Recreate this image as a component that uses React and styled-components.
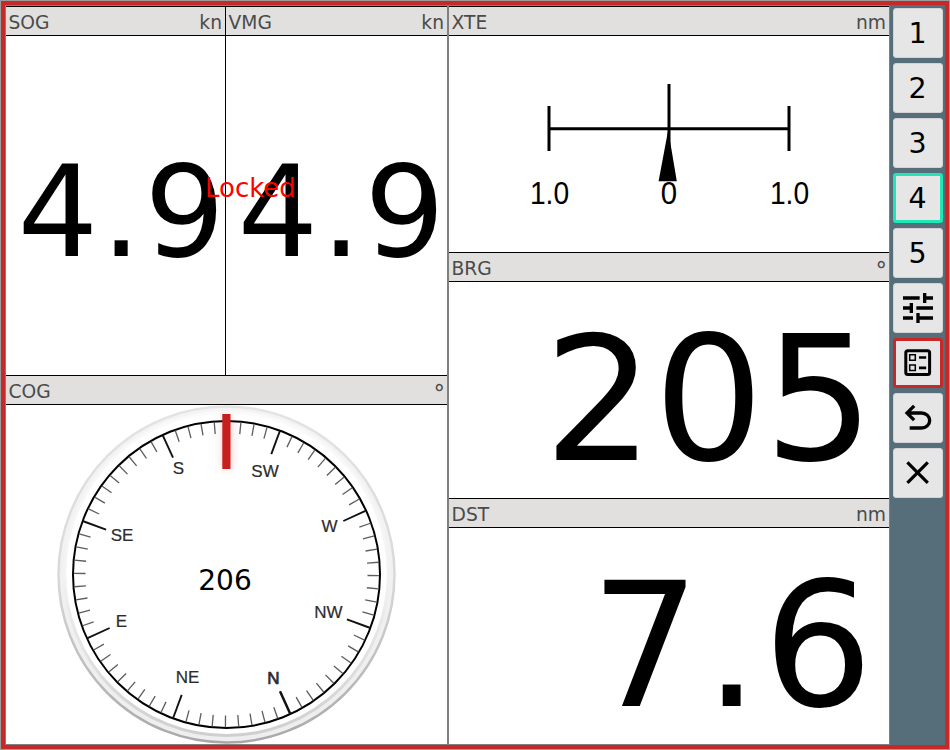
import React from 'react';
import styled, { createGlobalStyle } from 'styled-components';

const Global = createGlobalStyle`
  * { box-sizing: border-box; }
  body { margin: 0; background: #9a9a9a; font-family: "DejaVu Sans", sans-serif; overflow: hidden; }
`;

const Frame = styled.div`
  width: 950px;
  height: 750px;
  padding: 1px;
  background: #9c9c9c;
`;

const Alarm = styled.div`
  position: relative;
  display: flex;
  width: 948px;
  height: 748px;
  border: 4px solid #c82828;
`;

const Dashboard = styled.main`
  display: grid;
  grid-template-columns: 441px 440px;
  gap: 2px;
  width: 885px;
  height: 740px;
  padding: 1px;
  background: #808080;
`;

const Column = styled.section`
  display: flex;
  flex-direction: column;
`;

const Split = styled.div`
  flex: 1;
  display: grid;
  grid-template-columns: 220px 221px;
`;

const Widget = styled.article`
  flex: 1;
  min-height: 0;
  display: flex;
  flex-direction: column;
  background: #fff;
  border-top: 1px solid #000;
  border-right: ${(p) => (p.$divided ? '1px solid #000' : '0')};
`;

const Header = styled.header`
  flex: none;
  display: flex;
  justify-content: space-between;
  height: 29px;
  padding: 0 3px 0 2.5px;
  line-height: 31px;
  font-size: 18.7px;
  color: #4b4b4b;
  background: #e1e0de;
  border-bottom: 1px solid #000;
`;

const Unit = styled.span`
  font-size: ${(p) => (p.$degree ? '23px' : 'inherit')};
  line-height: ${(p) => (p.$degree ? '34px' : 'inherit')};
  margin-right: ${(p) => (p.$degree ? '-1px' : '0')};
`;

const Value = styled.div`
  flex: 1;
  display: flex;
  align-items: center;
  justify-content: flex-end;
  min-height: 0;
  padding-right: ${(p) => p.$right}px;
  padding-top: ${(p) => p.$drop}px;
  font-size: ${(p) => p.$size}px;
  font-kerning: none;
  line-height: 1;
  color: #000;
`;

const Point = styled.span`
  margin: 0 0.022em;
`;

const Drawing = styled.svg`
  display: block;
  flex: none;
`;

const Locked = styled.div`
  position: absolute;
  left: 200px;
  top: 167px;
  font-size: 26px;
  line-height: 32px;
  color: #f00;
`;

const Sidebar = styled.nav`
  flex: none;
  display: flex;
  flex-direction: column;
  gap: 5px;
  width: 55px;
  padding: 3px 2px 0 3px;
  background: #566e79;
`;

const Key = styled.button`
  flex: none;
  display: flex;
  align-items: center;
  justify-content: center;
  width: 50px;
  height: 50px;
  padding: 0 1px 0 0;
  font: 28.5px/50px "DejaVu Sans", sans-serif;
  color: #000;
  background: #e6e6e6;
  border: ${(p) => (p.$ring ? `3px solid ${p.$ring}` : '1px solid #d3d3d5')};
  border-radius: 3px;
`;

const Digit = styled.span`
  padding-top: 1px;
`;

const Glyph = styled.svg`
  flex: none;
  display: block;
  width: 50px;
  height: 50px;
`;

function Gauge({ title, unit, divided, children }) {
  return (
    <Widget $divided={divided}>
      <Header><span>{title}</span><Unit $degree={unit === '°'}>{unit}</Unit></Header>
      {children}
    </Widget>
  );
}

function Reading({ text, size, right, drop }) {
  const [whole, fraction] = text.split('.');
  return (
    <Value $size={size} $right={right} $drop={drop}>
      <div>{whole}{fraction && <><Point>.</Point>{fraction}</>}</div>
    </Value>
  );
}

const CX = 220.5;
const CY = 169.5;
const NORTH = 155.4;
const LABELS = [
  ['S', 172.5, 69], ['SW', 259, 72], ['W', 323.5, 127], ['NW', 322.5, 212.5],
  ['N', 267.5, 279], ['NE', 181.5, 278], ['E', 115.5, 222], ['SE', 116, 135.5],
];

function Compass() {
  const ticks = Array.from({ length: 72 }, (_, i) => i);
  return (
    <Drawing width="441" height="339" viewBox="0 0 441 339" fontFamily="Liberation Sans, sans-serif">
      <defs>
        <linearGradient id="rim" x1="0" y1="0" x2="0" y2="1">
          <stop offset="0" stopColor="#e4e4e4" />
          <stop offset="0.5" stopColor="#d9d9d9" />
          <stop offset="1" stopColor="#a8a8a8" />
        </linearGradient>
        <linearGradient id="bevel" x1="0" y1="0" x2="0" y2="1">
          <stop offset="0" stopColor="#f4f4f4" />
          <stop offset="1" stopColor="#eeeeee" />
        </linearGradient>
        <linearGradient id="lip" x1="0" y1="0" x2="0" y2="1">
          <stop offset="0" stopColor="#fafafa" />
          <stop offset="0.5" stopColor="#f3f3f3" />
          <stop offset="1" stopColor="#cfcfcf" />
        </linearGradient>
        <filter id="glow" x="-300%" y="-50%" width="700%" height="200%">
          <feGaussianBlur stdDeviation="5" />
        </filter>
      </defs>
      <circle cx={CX} cy={CY} r="168" fill="url(#bevel)" stroke="url(#rim)" strokeWidth="2.5" />
      <circle cx={CX} cy={CY - 0.8} r="161.8" fill="#fff" stroke="url(#lip)" strokeWidth="3" />
      <circle cx={CX} cy={CY} r="153.5" fill="#fff" stroke="#000" strokeWidth="2" />
      {ticks.map((i) => (
        <line
          key={i}
          x1={CX}
          x2={CX}
          y1={CY - 152.8}
          y2={CY - (i % 9 ? 141 : 128.5)}
          stroke={i % 9 ? '#5c5c5c' : '#111'}
          strokeWidth={i % 9 ? 1.3 : i ? 1.9 : 2.5}
          transform={`rotate(${NORTH + i * 5} ${CX} ${CY})`}
        />
      ))}
      {LABELS.map(([name, x, y]) => (
        <text key={name} x={x} y={y} fontSize="17" fill="#2c2c2c" textAnchor="middle" stroke="#2c2c2c" strokeWidth={name === 'N' ? 0.7 : 0.2}>{name}</text>
      ))}
      <rect x="217" y="12" width="8" height="52" fill="#c81e1e" opacity="0.25" filter="url(#glow)" />
      <rect x="216.3" y="9" width="8.2" height="55" fill="#c81e1e" />
      <text x="219" y="184.5" fontSize="28" fontFamily="DejaVu Sans, sans-serif" textAnchor="middle">206</text>
    </Drawing>
  );
}

function CrossTrack() {
  return (
    <Drawing width="440" height="216" viewBox="0 0 440 216" fontFamily="Liberation Sans, sans-serif">
      <path d="M100 92.7H340M100 70V115M340 70V115M220 48V112" fill="none" stroke="#000" strokeWidth="3" />
      <path d="M219.2 94L209.6 145.3H227.8Z" fill="#000" />
      <g fontSize="30" textAnchor="middle">
        <text transform="translate(100.5 168) scale(0.94 1.03)">1.0</text>
        <text transform="translate(220 168) scale(0.98 1.03)">0</text>
        <text transform="translate(340.5 168) scale(0.94 1.03)">1.0</text>
      </g>
    </Drawing>
  );
}

const TuneIcon = () => (
  <Glyph viewBox="-3 -3 30 30">
    <path d="M3 17v2h6v-2H3zM3 5v2h10V5H3zm10 16v-2h8v-2h-8v-2h-2v6h2zM7 9v2H3v2h4v2h2V9H7zm14 4v-2H11v2h10zm-6-4h2V7h4V5h-4V3h-2v6z" />
  </Glyph>
);

const BallotIcon = () => (
  <Glyph viewBox="0 0 50 50" fill="none" stroke="#000">
    <rect x="12.8" y="12.8" width="23.8" height="23.8" rx="2" strokeWidth="3" />
    <path d="M16.7 16.7h5.6v5.6h-5.6zM16.7 27h5.6v5.6h-5.6z" strokeWidth="1.5" />
    <path d="M26 19.5h7.2M26 29.8h7.2" strokeWidth="2.7" />
  </Glyph>
);

const UndoIcon = () => (
  <Glyph viewBox="-120 -1080 1200 1200">
    <path d="M280-200v-80h284q63 0 109.500-40T720-420q0-60-46.500-100T564-560H312l104 104-56 56-200-200 200-200 56 56-104 104h252q97 0 166.500 63T800-420q0 94-69.500 157T564-200H280Z" />
  </Glyph>
);

const CloseIcon = () => (
  <Glyph viewBox="0 0 50 50">
    <path d="M14.4 14.4L34.8 34.8M34.8 14.4L14.4 34.8" stroke="#000" strokeWidth="3.2" />
  </Glyph>
);

export default function App() {
  return (
    <>
      <Global />
      <Frame>
        <Alarm>
          <Dashboard>
            <Column>
              <Split>
                <Gauge title="SOG" unit="kn" divided><Reading text="4.9" size={127} right={0} drop={14} /></Gauge>
                <Gauge title="VMG" unit="kn"><Reading text="4.9" size={127} right={2} drop={14} /></Gauge>
              </Split>
              <Gauge title="COG" unit="°"><Compass /></Gauge>
            </Column>
            <Column>
              <Gauge title="XTE" unit="nm"><CrossTrack /></Gauge>
              <Gauge title="BRG" unit="°"><Reading text="205" size={173} right={15} drop={20} /></Gauge>
              <Gauge title="DST" unit="nm"><Reading text="7.6" size={173} right={16} drop={20} /></Gauge>
            </Column>
          </Dashboard>
          <Sidebar>
            <Key><Digit>1</Digit></Key>
            <Key><Digit>2</Digit></Key>
            <Key><Digit>3</Digit></Key>
            <Key $ring="#20e6b6"><Digit>4</Digit></Key>
            <Key><Digit>5</Digit></Key>
            <Key><TuneIcon /></Key>
            <Key $ring="#c82828"><BallotIcon /></Key>
            <Key><UndoIcon /></Key>
            <Key><CloseIcon /></Key>
          </Sidebar>
          <Locked>Locked</Locked>
        </Alarm>
      </Frame>
    </>
  );
}
